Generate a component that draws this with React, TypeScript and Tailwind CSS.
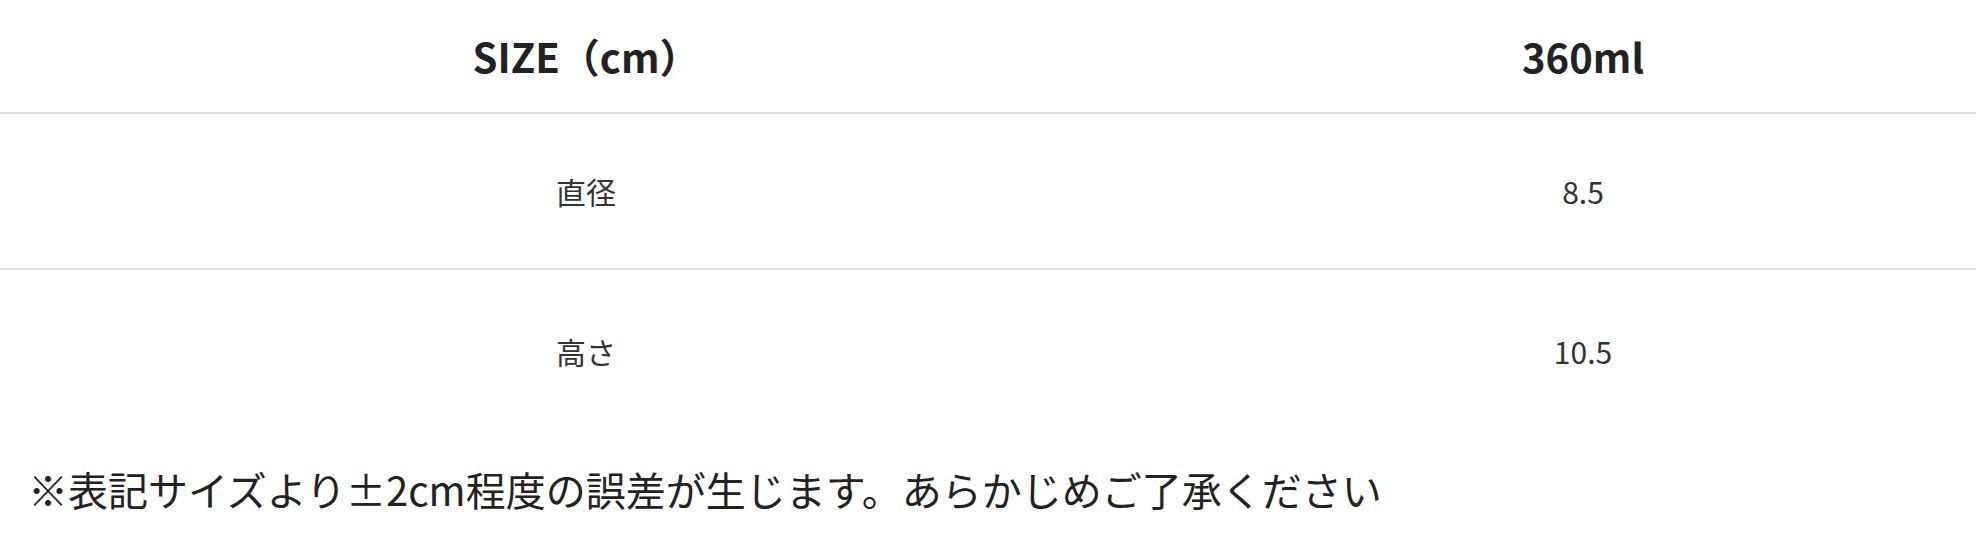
import React from "react";

const font = { fontFamily: '"Noto Sans CJK JP", "Noto Sans", sans-serif' };

export default function App() {
  return (
    <div className="w-[1976px] h-[552px] bg-white text-[#333]" style={font}>
      <div className="grid grid-cols-[1190px_786px]">
        <div className="h-[112px] flex items-center justify-center pr-[18px] text-[40px] font-bold text-[#222]">
          SIZE（cm）
        </div>
        <div className="h-[112px] flex items-center justify-center text-[40px] font-bold text-[#222]">
          360ml
        </div>
      </div>
      <div className="grid grid-cols-[1190px_786px] border-t-2 border-[#dedede]">
        <div className="h-[154px] flex items-center justify-center pr-[18px] text-[30px]">直径</div>
        <div className="h-[154px] flex items-center justify-center text-[30px]">8.5</div>
      </div>
      <div className="grid grid-cols-[1190px_786px] border-t-2 border-[#dedede]">
        <div className="h-[162px] flex items-center justify-center pr-[18px] text-[30px]">高さ</div>
        <div className="h-[162px] flex items-center justify-center text-[30px]">10.5</div>
      </div>
      <div className="pl-[28px] pt-[29px] text-[40px] leading-[56px] text-[#222]">
        ※表記サイズより±2cm程度の誤差が生じます。あらかじめご了承ください
      </div>
    </div>
  );
}
